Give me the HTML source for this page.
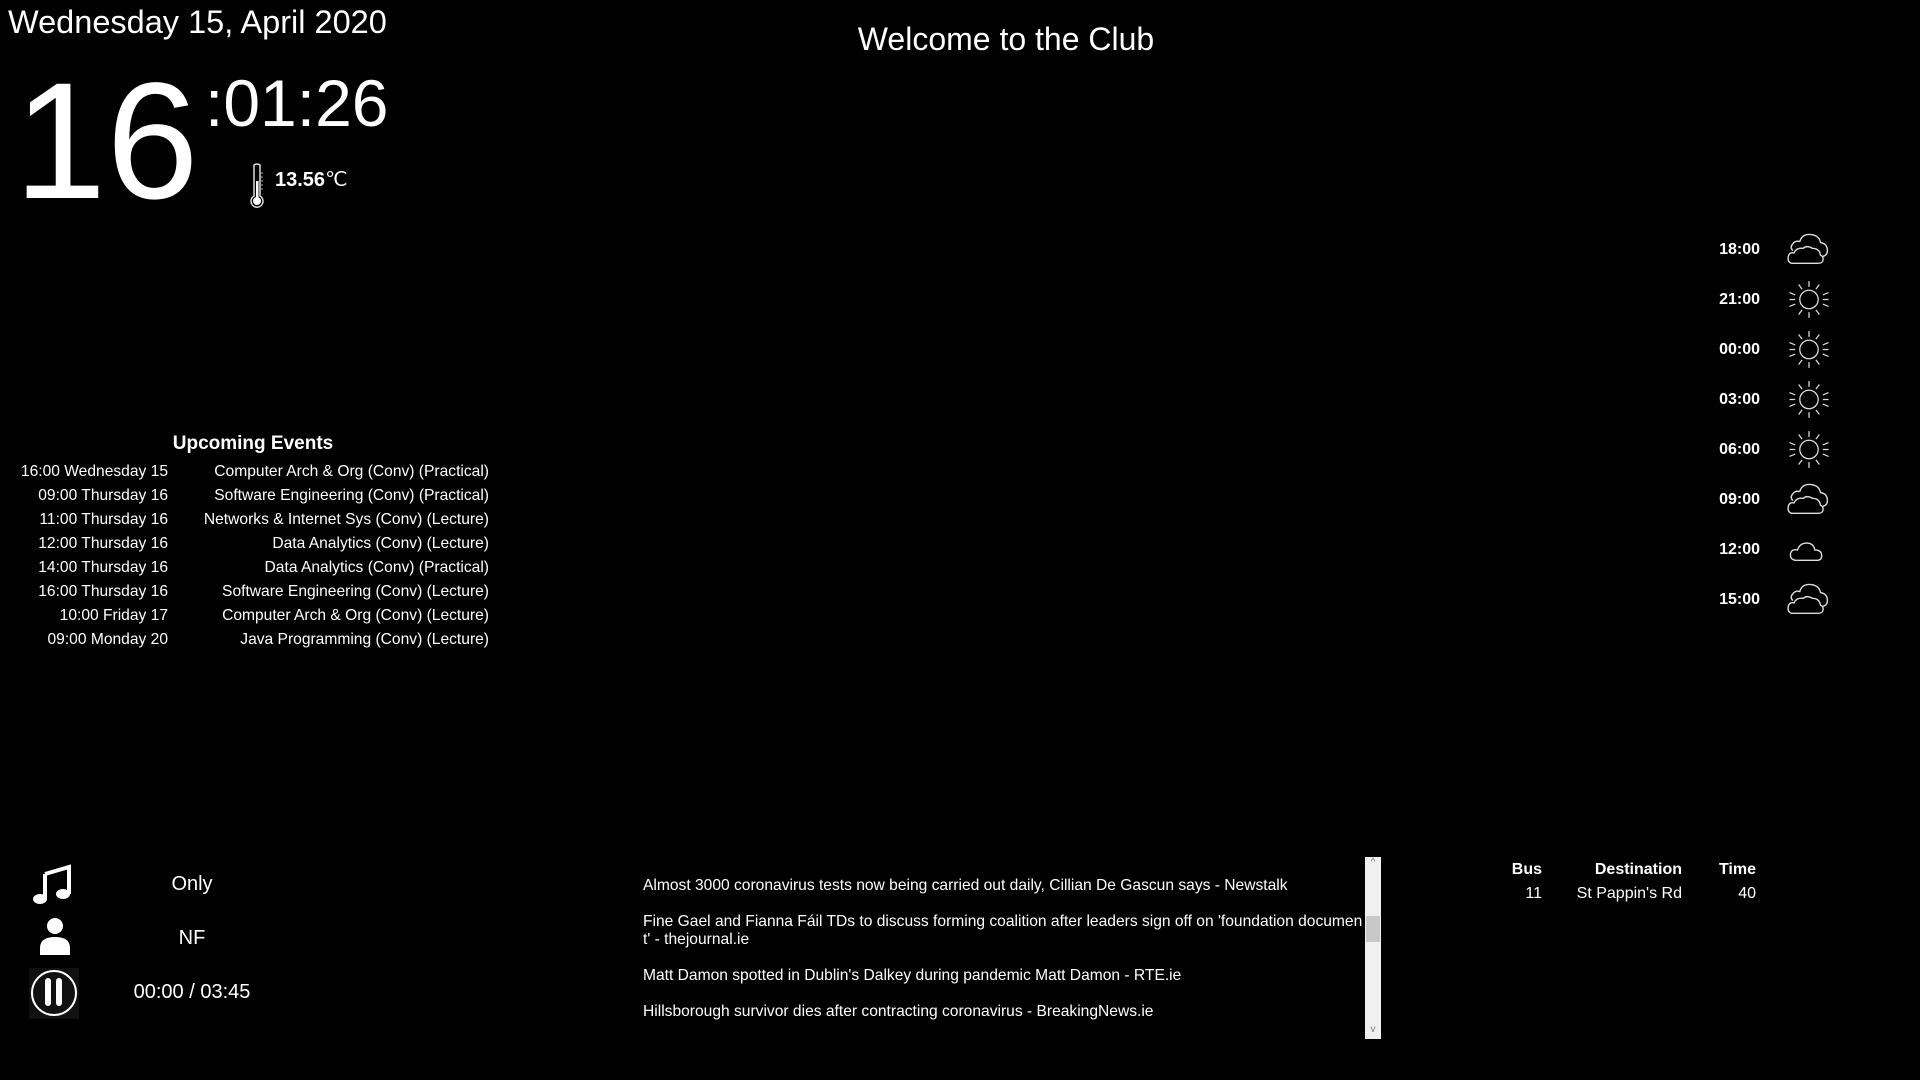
<!DOCTYPE html>
<html><head><meta charset="utf-8"><style>
html,body{margin:0;padding:0;background:#000;width:1920px;height:1080px;overflow:hidden;color:#fff;font-family:"Liberation Sans",Arial,sans-serif}
.a{position:absolute;white-space:nowrap}
.ev{position:absolute;font-size:15.6px;line-height:24px}
.ev div{height:24px}
.wt{position:absolute;left:1700px;width:60px;text-align:right;font-weight:bold;font-size:16px}
.wi{position:absolute;left:1786px}
.news{position:absolute;left:643px;font-size:15.6px;line-height:18px}
</style></head><body>
<div class="a" style="left:8px;top:4px;font-size:32.5px">Wednesday 15, April 2020</div>
<div class="a" style="left:14px;top:47px;font-size:166px;line-height:190px">16</div>
<div class="a" style="left:205px;top:63px;font-size:66px;line-height:80px">:01:26</div>
<svg class="a" style="left:247px;top:163px" width="20" height="45" viewBox="0 0 20 45"><path d="M7 2 Q10 0 13 2 V33 A6 6 0 1 1 7 33 Z" fill="none" stroke="#ddd" stroke-width="1.5"/><rect x="9" y="18" width="2.5" height="18" fill="#fff"/><circle cx="10" cy="38" r="4" fill="#fff"/><path d="M13 10h3M13 14h3M13 18h3M13 22h3M13 26h3" stroke="#aaa"/></svg>
<div class="a" style="left:275px;top:167px;font-size:20px;font-weight:bold">13.56<span style="font-weight:normal">℃</span></div>
<div class="a" style="left:856px;top:21px;width:300px;text-align:center;font-size:32px">Welcome to the Club</div>

<div class="a" style="left:153px;top:433px;width:200px;text-align:center;font-size:19px;font-weight:bold">Upcoming Events</div>
<div class="ev" style="left:0;top:460px;width:168px;text-align:right">
<div>16:00 Wednesday 15</div><div>09:00 Thursday 16</div><div>11:00 Thursday 16</div><div>12:00 Thursday 16</div><div>14:00 Thursday 16</div><div>16:00 Thursday 16</div><div>10:00 Friday 17</div><div>09:00 Monday 20</div></div>
<div class="ev" style="left:180px;top:460px;width:309px;text-align:right">
<div>Computer Arch &amp; Org (Conv) (Practical)</div><div>Software Engineering (Conv) (Practical)</div><div>Networks &amp; Internet Sys (Conv) (Lecture)</div><div>Data Analytics (Conv) (Lecture)</div><div>Data Analytics (Conv) (Practical)</div><div>Software Engineering (Conv) (Lecture)</div><div>Computer Arch &amp; Org (Conv) (Lecture)</div><div>Java Programming (Conv) (Lecture)</div></div>

<svg width="0" height="0" style="position:absolute"><defs>
<g id="cc" fill="none" stroke="#ddd" stroke-width="1.2"><path d="M6 17 Q3 14 6 11 Q8 8 12 9 Q14 2 22 3 Q29 4 30 10 Q36 11 36 17 Q36 21 32 22"/><path d="M5 28 Q1 27 2 22 Q3 18 7 19 Q9 14 15 15 Q18 12 23 15 Q29 15 30 21 Q33 22 32 26 Q31 28 28 28 Z" fill="#000"/></g>
<g id="sun" fill="none" stroke="#ddd" stroke-width="1.1"><circle cx="20" cy="16" r="8"/><path d="M20 0v5M20 27v5M3 16h5M32 16h5M11 3l3 4M29 3l-3 4M11 29l3-4M29 29l-3-4M3 10l5 2M37 10l-5 2M3 22l5-2M37 22l-5-2"/></g>
<g id="c1" fill="none" stroke="#ddd" stroke-width="1.2"><path d="M8 28 Q3 27 4 22 Q5 18 10 19 Q12 13 18 13 Q24 13 25 19 Q31 19 31 24 Q31 28 27 28 Z"/></g>
</defs></svg>
<div class="wt" style="top:241px">18:00</div><svg class="wi" style="top:231px" width="46" height="37" viewBox="0 0 40 32"><use href="#cc"/></svg>
<div class="wt" style="top:291px">21:00</div><svg class="wi" style="top:281px" width="46" height="37" viewBox="0 0 40 32"><use href="#sun"/></svg>
<div class="wt" style="top:341px">00:00</div><svg class="wi" style="top:331px" width="46" height="37" viewBox="0 0 40 32"><use href="#sun"/></svg>
<div class="wt" style="top:391px">03:00</div><svg class="wi" style="top:381px" width="46" height="37" viewBox="0 0 40 32"><use href="#sun"/></svg>
<div class="wt" style="top:441px">06:00</div><svg class="wi" style="top:431px" width="46" height="37" viewBox="0 0 40 32"><use href="#sun"/></svg>
<div class="wt" style="top:491px">09:00</div><svg class="wi" style="top:481px" width="46" height="37" viewBox="0 0 40 32"><use href="#cc"/></svg>
<div class="wt" style="top:541px">12:00</div><svg class="wi" style="top:528px" width="46" height="37" viewBox="0 0 40 32"><use href="#c1"/></svg>
<div class="wt" style="top:591px">15:00</div><svg class="wi" style="top:581px" width="46" height="37" viewBox="0 0 40 32"><use href="#cc"/></svg>

<svg class="a" style="left:32px;top:864px" width="40" height="42" viewBox="0 0 40 42"><path d="M13 10 L37 3 V30" stroke="#fff" stroke-width="4" fill="none"/><path d="M13 10 V34" stroke="#fff" stroke-width="4"/><ellipse cx="8" cy="35" rx="7" ry="5" fill="#fff"/><ellipse cx="31" cy="30" rx="7" ry="5" fill="#fff"/></svg>
<svg class="a" style="left:38px;top:916px" width="34" height="40"><circle cx="17" cy="10" r="8" fill="#fff"/><path d="M2 39 V32 Q2 21 17 21 Q32 21 32 32 V39 Z" fill="#fff"/></svg>
<div class="a" style="left:29px;top:968px;width:50px;height:51px;background:#111"></div>
<svg class="a" style="left:29px;top:968px" width="50" height="51"><circle cx="25" cy="25" r="22" fill="none" stroke="#fff" stroke-width="2"/><rect x="16" y="10" width="6" height="28" rx="3" fill="#fff"/><rect x="27" y="10" width="6" height="28" rx="3" fill="#fff"/></svg>
<div class="a" style="left:92px;top:873px;width:200px;text-align:center;font-size:20px">Only</div>
<div class="a" style="left:92px;top:927px;width:200px;text-align:center;font-size:20px">NF</div>
<div class="a" style="left:92px;top:981px;width:200px;text-align:center;font-size:20px">00:00 / 03:45</div>

<div class="news" style="top:877px">Almost 3000 coronavirus tests now being carried out daily, Cillian De Gascun says - Newstalk</div>
<div class="news" style="top:913px">Fine Gael and Fianna Fáil TDs to discuss forming coalition after leaders sign off on 'foundation documen<br>t' - thejournal.ie</div>
<div class="news" style="top:967px">Matt Damon spotted in Dublin's Dalkey during pandemic Matt Damon - RTE.ie</div>
<div class="news" style="top:1003px">Hillsborough survivor dies after contracting coronavirus - BreakingNews.ie</div>
<div class="a" style="left:1365px;top:857px;width:16px;height:182px;background:#f0f0f0"></div>
<div class="a" style="left:1366px;top:916px;width:14px;height:26px;background:#c8c8c8"></div>
<div class="a" style="left:1367px;top:857px;width:12px;text-align:center;font-size:10px;color:#777">^</div>
<div class="a" style="left:1367px;top:1024px;width:12px;text-align:center;font-size:10px;color:#777">v</div>

<div class="a" style="left:1480px;top:861px;width:62px;text-align:right;font-size:16px;font-weight:bold">Bus</div>
<div class="a" style="left:1560px;top:861px;width:122px;text-align:right;font-size:16px;font-weight:bold">Destination</div>
<div class="a" style="left:1700px;top:861px;width:56px;text-align:right;font-size:16px;font-weight:bold">Time</div>
<div class="a" style="left:1480px;top:885px;width:62px;text-align:right;font-size:16px">11</div>
<div class="a" style="left:1560px;top:885px;width:122px;text-align:right;font-size:16px">St Pappin's Rd</div>
<div class="a" style="left:1700px;top:885px;width:56px;text-align:right;font-size:16px">40</div>
</body></html>
